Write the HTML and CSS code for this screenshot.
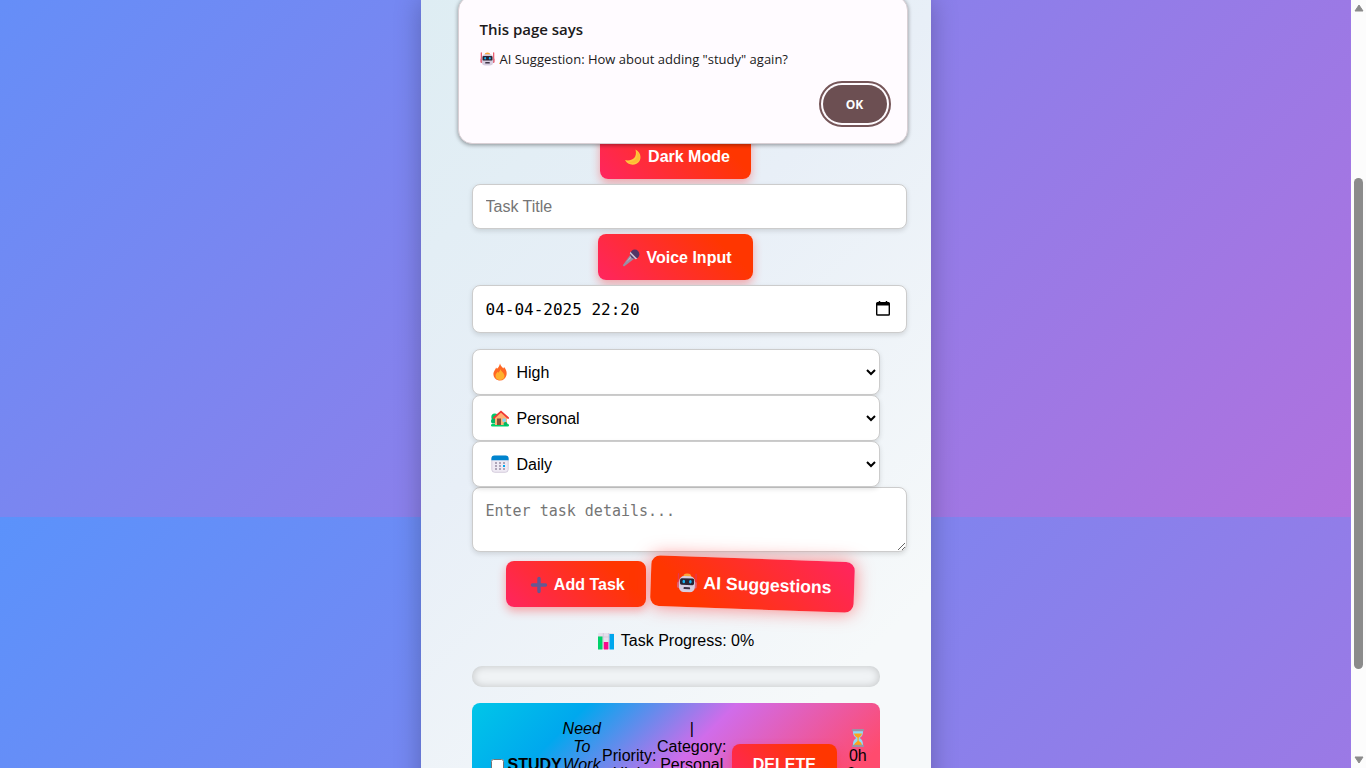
FILE: index.html
```html
<!DOCTYPE html>
<html lang="en">
<head>
<meta charset="utf-8">
<title>Task Manager</title>
<link rel="stylesheet" href="styles.css">
</head>
<body>
<svg class="sprites" aria-hidden="true">
  <symbol id="robot" viewBox="0 0 18 18">
    <path d="M1 1v12M17 1v12" stroke="#e8364a" stroke-width="1.300" stroke-linecap="round"/>
    <path d="M5.500 3a3.500 2.500 0 0 1 7 0v2h-7z" fill="#f9a53a"/>
    <rect x="0" y="8" width="3" height="6" rx="1.500" fill="#e06478"/><rect x="15" y="8" width="3" height="6" rx="1.500" fill="#e06478"/>
    <rect x="1.800" y="3" width="14.400" height="14.500" rx="4.500" fill="#d6cde0"/>
    <rect x="2.600" y="5" width="12.800" height="6" rx="1.500" fill="#2b2433"/>
    <ellipse cx="6" cy="8" rx="1.200" ry="1.600" fill="#1ab4f0"/><ellipse cx="12" cy="8" rx="1.200" ry="1.600" fill="#1ab4f0"/>
    <rect x="6" y="13" width="6" height="1.800" rx=".8" fill="#3c3245"/>
  </symbol>
  <symbol id="moon" viewBox="0 0 18 18">
    <path d="M11.500 1.500C18 5 18 13 12.500 15.800 8 18 3 16 1 12c5 1.500 13-1 10.500-10.500z" fill="#ffc83d"/>
    <path d="M12 3c3 5 0 11-8 11 4 2.500 10 1.500 11.500-3.500C16.300 7.500 14.500 4.500 12 3z" fill="#fbb52e" opacity=".6"/>
  </symbol>
  <symbol id="mic" viewBox="0 0 18 18">
    <path d="M.8 16.200L8.500 5.500l4 4L2 17.400z" fill="#998ea4"/>
    <path d="M4 13.500l5-6.500 1 1z" fill="#c0b7ca"/>
    <circle cx="12.800" cy="5.200" r="4.600" fill="#533566"/>
    <path d="M8.300 2.800l7 7-1.900.4-5.600-5.600z" fill="#cdc4d6"/>
  </symbol>
  <symbol id="fire" viewBox="0 0 18 18">
    <path d="M9 .5c.5 2.500 2 3 3.300 5l.8-1.500c2.200 2.800 3 5.300 2.400 8-.8 3.500-3.300 5.500-6.500 5.500s-6-2.200-6.500-5.500C2 8.500 4.500 7 5 4.500l1 1.300C7.500 4.500 8.500 2.500 9 .5z" fill="#ff6723"/>
    <path d="M9.500 6c.3 2.500 4 3.800 4 7 0 2.500-2 4-4.500 4s-4.500-1.600-4.500-4c0-2.300 1.500-3 2-4.300l.8 1C8.500 8.500 9.200 7.500 9.500 6z" fill="#ffb02e"/>
  </symbol>
  <symbol id="house" viewBox="0 0 18 18">
    <circle cx="3.800" cy="8" r="3.500" fill="#00c96b"/><circle cx="2.600" cy="12" r="2.600" fill="#00b864"/>
    <rect x="0" y="15" width="18" height="2.500" rx="1.200" fill="#00d26a"/>
    <path d="M4 8l6-5 6 5v8H4z" fill="#ffb173"/>
    <path d="M2.800 9L10 2.600 17.200 9" fill="none" stroke="#f03a35" stroke-width="1.700" stroke-linecap="round"/>
    <rect x="6" y="9.500" width="4" height="6.500" fill="#8b4f37"/><rect x="11.500" y="9.500" width="3.300" height="3.300" fill="#7fd6f7"/>
    <circle cx="14.500" cy="15" r="2" fill="#00b864"/>
  </symbol>
  <symbol id="calendar" viewBox="0 0 18 18">
    <rect x=".8" y="1.300" width="16.400" height="16" rx="2.800" fill="#efeaf4" stroke="#cdc4d6" stroke-width=".8"/>
    <path d="M.4 5.300V3.500A3 3 0 0 1 3.400.5h11.200a3 3 0 0 1 3 3v1.800z" fill="#0084ce"/>
    <path d="M4 8h2m2 0h2m2 0h2M4 11h2m2 0h2M4 14h2m2 0h2m2 0h2" stroke="#998ea4" stroke-width="1.600"/>
    <path d="M12 11h2" stroke="#00a6ed" stroke-width="1.800"/>
  </symbol>
  <symbol id="plus" viewBox="0 0 18 18">
    <path d="M9 2.500v13M2.500 9h13" stroke="#635994" stroke-width="3.400" stroke-linecap="round"/>
  </symbol>
  <symbol id="chart" viewBox="0 0 18 18">
    <rect x="1" y="1" width="16" height="16" rx="1" fill="#e6dfec"/>
    <path d="M1 5h16M6.300 1v16M11.700 1v16" stroke="#cdc4d6" stroke-width=".7"/>
    <rect x="1" y="4.500" width="4.500" height="13" fill="#00d26a"/><rect x="6.800" y="10" width="4.500" height="7.500" fill="#f70a8d"/><rect x="12.500" y="2" width="4.500" height="15.500" fill="#00a6ed"/>
  </symbol>
  <symbol id="hourglass" viewBox="0 0 18 18">
    <path d="M4 2h10c0 4-1 5.500-3.500 7 2.500 1.500 3.500 3 3.500 7H4c0-4 1-5.500 3.500-7C5 7.500 4 6 4 2z" fill="#8fdcf8"/>
    <path d="M5 4.500h8c-.3 2-1.500 3-3.300 4.300V12c1.800.8 3 2 3.300 4H5c.3-1 2-3 3.500-4V8.800C6.500 7.500 5.300 6.500 5 4.500z" fill="#ffa31a"/>
    <rect x="3" y="0" width="12" height="2.200" rx=".8" fill="#9a94a5"/><rect x="3" y="15.800" width="12" height="2.200" rx=".8" fill="#9a94a5"/>
  </symbol>
</svg>

<div class="viewport">
  <main class="page">
    <section class="card">
      <button class="btn" type="button"><svg class="emoji"><use href="#moon"/></svg>Dark Mode</button>
      <input class="field" type="text" placeholder="Task Title" aria-label="Task Title">
      <button class="btn" type="button"><svg class="emoji"><use href="#mic"/></svg>Voice Input</button>
      <div class="date">
        <input class="field date-field" type="text" value="04-04-2025 22:20" aria-label="Due date">
        <button class="picker" type="button" aria-label="Open calendar">
          <svg viewBox="0 0 14 15"><path d="M3.500 0v2M10.500 0v2" stroke="#000" stroke-width="1.500"/><rect x=".7" y="1.700" width="12.600" height="12.300" rx=".8" fill="none" stroke="#000" stroke-width="1.400"/><path d="M1 1.500h12v3H1z"/></svg>
        </button>
      </div>
      <div class="selects">
        <div class="pick"><select class="select" aria-label="Priority"><option>High</option></select><svg class="emoji"><use href="#fire"/></svg></div>
        <div class="pick"><select class="select" aria-label="Category"><option>Personal</option></select><svg class="emoji"><use href="#house"/></svg></div>
        <div class="pick"><select class="select" aria-label="Repeat"><option>Daily</option></select><svg class="emoji"><use href="#calendar"/></svg></div>
      </div>
      <textarea class="field details" placeholder="Enter task details..." aria-label="Task details"></textarea>
      <div class="actions">
        <button class="btn" type="button"><svg class="emoji"><use href="#plus"/></svg>Add Task</button>
        <button class="btn btn-ai" type="button"><svg class="emoji"><use href="#robot"/></svg>AI Suggestions</button>
      </div>
      <p class="status"><svg class="emoji"><use href="#chart"/></svg>Task Progress: 0%</p>
      <div class="bar" role="progressbar" aria-label="Task progress" aria-valuenow="0" aria-valuemin="0" aria-valuemax="100"></div>
      <ul class="tasks">
        <li class="task">
          <input class="check" type="checkbox" aria-label="Study done">
          <strong class="name">STUDY</strong>
          <em class="note">Need To Work Hard Daily</em>
          <span class="priority">Priority: High</span>
          <span class="category">| Category: Personal |&nbsp;Repeat: Daily</span>
          <button class="btn btn-delete" type="button">DELETE</button>
          <span class="time"><svg class="emoji"><use href="#hourglass"/></svg>0h 0m 0s</span>
        </li>
      </ul>
    </section>
    <div class="dialog" role="alertdialog" aria-labelledby="dlg-title">
      <h2 class="dialog-title" id="dlg-title">This page says</h2>
      <p class="dialog-text"><svg class="emoji"><use href="#robot"/></svg>AI Suggestion: How about adding "study" again?</p>
      <button class="ok" type="button">OK</button>
    </div>
  </main>
  <div class="scroll" aria-hidden="true">
    <svg class="arrow" viewBox="0 0 10 8"><path d="M5 1l4 6H1z" fill="#8b8b8b" stroke="#8b8b8b" stroke-linejoin="round"/></svg>
    <div class="track"><div class="thumb"></div></div>
    <svg class="arrow" viewBox="0 0 10 8"><path d="M5 7l4-6H1z" fill="#8b8b8b" stroke="#8b8b8b" stroke-linejoin="round"/></svg>
  </div>
</div>
</body>
</html>
```
FILE: styles.css
```css
body {
  margin: 0;
  font-family: "Liberation Sans", Arial, sans-serif;
  font-size: 16px;
  color: #000;
}

.sprites {
  display: none;
}

.viewport {
  display: flex;
  height: 100vh;
  overflow: hidden;
}

.page {
  position: relative;
  flex: 1;
  display: flex;
  justify-content: center;
  background: linear-gradient(135deg, #5b92fb, #b071de) 0 -251px / 100% 100vh repeat;
}

.card {
  display: flex;
  flex-direction: column;
  align-items: center;
  box-sizing: border-box;
  width: 510px;
  height: max-content;
  padding: 133px 51px 40px;
  background: linear-gradient(135deg, #deedf3, #e8eff7 38%, #f6f9fa 80%);
  box-shadow: 0 0 25px rgba(0, 0, 0, 0.25);
}

.emoji {
  flex: none;
  width: 18px;
  height: 18px;
}

.btn {
  display: flex;
  align-items: center;
  justify-content: center;
  gap: 6px;
  box-sizing: border-box;
  height: 46px;
  padding: 2px 21px 0 24px;
  border: 0;
  border-radius: 8px;
  background: linear-gradient(45deg, #ff2560, #ff3600 80%);
  box-shadow: 0 4px 10px rgba(255, 50, 50, 0.4);
  color: #fff;
  font: bold 16px "Liberation Sans", Arial, sans-serif;
}

.field {
  align-self: flex-start;
  width: 100%;
  height: 19px;
  margin: 5px 0;
  padding: 12px 12px 12px 13px;
  border: 1px solid #ccc;
  border-radius: 8px;
  background: #fff;
  box-shadow: 0 2px 5px rgba(0, 0, 0, 0.12);
  font: 16px "Liberation Sans", Arial, sans-serif;
}

.field::placeholder {
  color: #757575;
}

.date {
  position: relative;
  width: 100%;
  margin-bottom: 11px;
}

.date-field {
  height: 22px;
  font-family: "DejaVu Sans Mono", monospace;
}

.picker {
  position: absolute;
  top: 21px;
  right: -10px;
  width: 14px;
  height: 15px;
  padding: 0;
  border: 0;
  background: none;
}

.picker svg {
  display: block;
}

.selects {
  width: 100%;
}

.pick {
  position: relative;
}

.pick .emoji {
  position: absolute;
  top: 14px;
  left: 19px;
}

.select {
  display: block;
  box-sizing: border-box;
  width: 100%;
  height: 46px;
  padding: 0 0 0 40px;
  border: 1px solid #ccc;
  border-radius: 8px;
  background: #fff;
  box-shadow: 0 2px 5px rgba(0, 0, 0, 0.12);
  color: #000;
  font: 16px "Liberation Sans", Arial, sans-serif;
}

.details {
  height: 37px;
  margin: 0 0 9px;
  padding-top: 14px;
  font: 15px "DejaVu Sans Mono", monospace;
}

.actions {
  display: flex;
  gap: 14px;
}

.btn-ai {
  background: linear-gradient(225deg, #ff2560, #ff3600 80%);
  box-shadow: 0 0 16px rgba(255, 50, 50, 0.6);
  transform: scale(1.1) rotate(2deg);
}

.status {
  display: flex;
  align-items: center;
  gap: 6px;
  margin: 25px 0 16px;
}

.bar {
  width: 100%;
  height: 21px;
  border-radius: 10px;
  background: #f0f3f5;
  box-shadow: inset 0 0 8px rgba(0, 0, 0, 0.2);
}

.tasks {
  width: 100%;
  margin: 16px 0 0;
  padding: 0;
  list-style: none;
}

.task {
  display: flex;
  align-items: center;
  box-sizing: border-box;
  min-height: 124px;
  padding: 15px 4px 15px 15px;
  border-radius: 8px;
  background: linear-gradient(135deg, #00c6e8, #00a8ee 22%, #d06cea 50%, #ff4b6e 85%);
  line-height: 18px;
  text-align: center;
}

.check {
  margin: 3px 4px 3px 4px;
}

.name,
.note,
.priority,
.category,
.btn-delete,
.time {
  flex: none;
}

.note {
  width: 40px;
}

.priority {
  width: 55px;
}

.category {
  width: 70px;
}

.btn-delete {
  height: 42px;
  margin: 0 5px;
  padding: 0 21px;
}

.time {
  width: 32px;
}

.time .emoji {
  display: block;
  margin: 0 auto;
}

.dialog {
  position: absolute;
  top: -4px;
  left: 50%;
  display: flex;
  flex-direction: column;
  box-sizing: border-box;
  width: 450px;
  margin-left: -218px;
  padding: 22px 18px 18px 21px;
  border: 1px solid #d8cfd4;
  border-radius: 14px;
  background: #fffbff;
  box-shadow: 0 1px 4px rgba(0, 0, 0, 0.4);
  color: #201a1b;
  font-family: "Open Sans", "Noto Sans", sans-serif;
}

.dialog-title {
  margin: 0 0 11px;
  font-size: 15px;
  font-weight: 600;
  line-height: 20px;
}

.dialog-text {
  display: flex;
  align-items: center;
  gap: 5px;
  margin: 0 0 15px;
  font-size: 13px;
  line-height: 18px;
}

.dialog-text .emoji {
  width: 15px;
  height: 14px;
}

.ok {
  align-self: flex-end;
  width: 64px;
  height: 38px;
  margin: 2px;
  border: 0;
  border-radius: 20px;
  outline: 2px solid #765659;
  outline-offset: 2px;
  background: #6c4f52;
  color: #fff;
  font: 700 12px "Open Sans", "Noto Sans", sans-serif;
}

.scroll {
  display: flex;
  flex-direction: column;
  align-items: center;
  box-sizing: border-box;
  width: 15px;
  padding: 4px 0;
  background: #fcfcfc;
}

.arrow {
  width: 10px;
  height: 8px;
}

.track {
  flex: 1;
  width: 9px;
  padding-top: 166px;
}

.thumb {
  height: 491px;
  border-radius: 5px;
  background: #8b8b8b;
}
```
